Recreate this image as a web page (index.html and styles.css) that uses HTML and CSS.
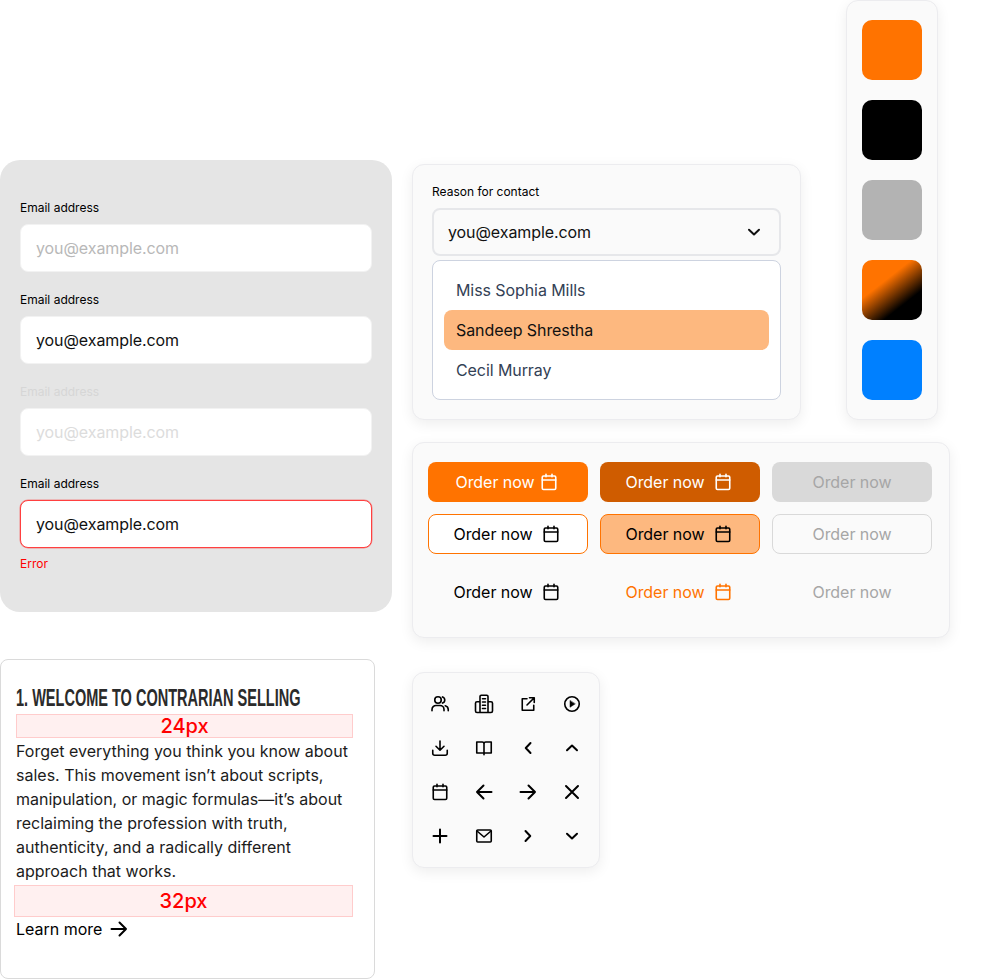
FILE: index.html

```html
<!DOCTYPE html>
<html lang="en">
<head>
  <meta charset="UTF-8" />
  <title>Component sheet</title>
  <link rel="stylesheet" href="styles.css">
</head>
<body>
  <svg class="sprite" xmlns="http://www.w3.org/2000/svg">
    <symbol id="i-calendar" viewBox="0 0 20 20"><rect x="3.25" y="4" width="13.5" height="13.5" rx="1.25"/><path d="M3.250 8h13.500M7 2.250v2.500M13 2.250v2.500"/></symbol>
    <symbol id="i-users" viewBox="0 0 20 20"><circle cx="8" cy="6" r="3.250"/><path d="M2 16.750v-1.250a4 4 0 0 1 4-4h4a4 4 0 0 1 4 4v1.250M12.500 2.900a3.250 3.250 0 0 1 0 6.200M15.250 11.700a4 4 0 0 1 3 3.800v1.250"/></symbol>
    <symbol id="i-building" viewBox="0 0 20 20"><path d="M6 18.500V2.500a1.250 1.250 0 0 1 1.250-1.250h5.500A1.250 1.250 0 0 1 14 2.500v16M6 7.750H3a1.500 1.500 0 0 0-1.500 1.500V17A1.500 1.500 0 0 0 3 18.500h14a1.500 1.500 0 0 0 1.500-1.500V9.250a1.500 1.500 0 0 0-1.500-1.500h-3M8.500 4.750h3M8.500 8h3M8.500 11.250h3M8.500 14.500h3"/></symbol>
    <symbol id="i-external" viewBox="0 0 20 20"><path d="M9 4.750H4.250v11.500h11.500V11.250M9 11 16 4M11.500 3.750h4.750V8.500"/></symbol>
    <symbol id="i-play" viewBox="0 0 20 20"><circle cx="10" cy="10" r="7.250"/><path class="filled" d="M8 6.750v6.500L13 10z"/></symbol>
    <symbol id="i-download" viewBox="0 0 20 20"><path d="M10 3v9M6 8.250l4 4 4-4M2.750 12.250v3a2 2 0 0 0 2 2h10.500a2 2 0 0 0 2-2v-3"/></symbol>
    <symbol id="i-book" viewBox="0 0 20 20"><path d="M2.750 4h5.500A1.750 1.750 0 0 1 10 5.750 1.750 1.750 0 0 1 11.750 4h5.500v11H2.750zM10 5.750V16.750"/></symbol>
    <symbol id="i-left" viewBox="0 0 20 20"><path class="thick" d="M12.500 5 7.750 10l4.750 5"/></symbol>
    <symbol id="i-right" viewBox="0 0 20 20"><path class="thick" d="M7.500 5l4.750 5-4.750 5"/></symbol>
    <symbol id="i-up" viewBox="0 0 20 20"><path class="thick" d="M5 12.250l5-4.750 5 4.750"/></symbol>
    <symbol id="i-down" viewBox="0 0 20 20"><path class="thick" d="M5 7.750l5 4.750 5-4.750"/></symbol>
    <symbol id="i-mail" viewBox="0 0 20 20"><rect x="2.750" y="4" width="14.500" height="12" rx="1"/><path d="M3 5l7 6 7-6"/></symbol>
    <symbol id="i-arrow-left" viewBox="0 0 24 24"><path d="M19.500 12H5M11.500 5.500 5 12l6.500 6.500"/></symbol>
    <symbol id="i-arrow-right" viewBox="0 0 24 24"><path d="M4.500 12H19M12.500 5.500 19 12l-6.500 6.500"/></symbol>
    <symbol id="i-x" viewBox="0 0 24 24"><path d="M6 6l12 12M18 6 6 18"/></symbol>
    <symbol id="i-plus" viewBox="0 0 24 24"><path d="M12 5.500v13M5.500 12h13"/></symbol>
  </svg>

  <div class="sheet">
    <div class="col-left">
      <form class="form-panel">
        <div class="field">
          <label>Email address</label>
          <input type="text" placeholder="you@example.com">
        </div>
        <div class="field">
          <label>Email address</label>
          <input type="text" value="you@example.com">
        </div>
        <div class="field disabled">
          <label>Email address</label>
          <input type="text" placeholder="you@example.com" disabled>
        </div>
        <div class="field error">
          <label>Email address</label>
          <input type="text" value="you@example.com">
          <span class="error-text">Error</span>
        </div>
      </form>

      <article class="article">
        <h2><span>1. Welcome to Contrarian Selling</span></h2>
        <div class="spacer spacer-24">24px</div>
        <p>Forget everything you think you know about sales. This movement isn’t about scripts, manipulation, or magic formulas—it’s about reclaiming the profession with truth, authenticity, and a radically different approach that works.</p>
        <div class="spacer spacer-32">32px</div>
        <a class="learn-more" href="#">Learn more <svg class="ic-24"><use href="#i-arrow-right"/></svg></a>
      </article>
    </div>

    <div class="col-right">
      <div class="top-row">
        <div class="panel select-panel">
          <label>Reason for contact</label>
          <div class="select-box">
            <span>you@example.com</span>
            <svg class="ic-20"><use href="#i-down"/></svg>
          </div>
          <ul class="options">
            <li>Miss Sophia Mills</li>
            <li class="active">Sandeep Shrestha</li>
            <li>Cecil Murray</li>
          </ul>
        </div>
        <div class="panel swatches">
          <div class="swatch orange"></div>
          <div class="swatch black"></div>
          <div class="swatch grey"></div>
          <div class="swatch gradient"></div>
          <div class="swatch blue"></div>
        </div>
      </div>

      <div class="panel buttons">
        <button class="btn solid tight">Order now <svg class="ic-20"><use href="#i-calendar"/></svg></button>
        <button class="btn solid-dark">Order now <svg class="ic-20"><use href="#i-calendar"/></svg></button>
        <button class="btn solid-off">Order now</button>
        <button class="btn outline">Order now <svg class="ic-20"><use href="#i-calendar"/></svg></button>
        <button class="btn outline-on">Order now <svg class="ic-20"><use href="#i-calendar"/></svg></button>
        <button class="btn outline-off">Order now</button>
        <button class="btn ghost">Order now <svg class="ic-20"><use href="#i-calendar"/></svg></button>
        <button class="btn ghost-on">Order now <svg class="ic-20"><use href="#i-calendar"/></svg></button>
        <button class="btn ghost-off">Order now</button>
      </div>

      <div class="panel icons">
        <svg class="ic-20"><use href="#i-users"/></svg>
        <svg class="ic-20"><use href="#i-building"/></svg>
        <svg class="ic-20"><use href="#i-external"/></svg>
        <svg class="ic-20"><use href="#i-play"/></svg>
        <svg class="ic-20"><use href="#i-download"/></svg>
        <svg class="ic-20"><use href="#i-book"/></svg>
        <svg class="ic-20"><use href="#i-left"/></svg>
        <svg class="ic-20"><use href="#i-up"/></svg>
        <svg class="ic-20"><use href="#i-calendar"/></svg>
        <svg class="ic-24"><use href="#i-arrow-left"/></svg>
        <svg class="ic-24"><use href="#i-arrow-right"/></svg>
        <svg class="ic-24"><use href="#i-x"/></svg>
        <svg class="ic-24"><use href="#i-plus"/></svg>
        <svg class="ic-20"><use href="#i-mail"/></svg>
        <svg class="ic-20"><use href="#i-right"/></svg>
        <svg class="ic-20"><use href="#i-down"/></svg>
      </div>
    </div>
  </div>
</body>
</html>
```

FILE: styles.css

```css
* {
  box-sizing: border-box;
}
body {
  margin: 0;
  background: #fff;
  color: #000;
  font-family: Inter, "Noto Sans", sans-serif;
  font-size: 16px;
  line-height: 24px;
}
.sprite {
  display: none;
}
svg {
  fill: none;
  stroke: currentColor;
  stroke-width: 1.6;
  stroke-linecap: round;
  stroke-linejoin: round;
  flex: none;
}
.filled {
  fill: currentColor;
  stroke-width: 0.5;
}
.thick {
  stroke-width: 2;
}
.ic-20 {
  width: 20px;
  height: 20px;
}
.ic-24 {
  width: 24px;
  height: 24px;
  stroke-width: 2;
}
.sheet {
  display: flex;
  gap: 20px;
}
.col-left {
  width: 392px;
  padding-top: 160px;
}
.col-right {
  width: 538px;
}

/* form */
.form-panel {
  height: 452px;
  padding: 40px 20px;
  background: #e5e5e5;
  border-radius: 20px;
  display: flex;
  flex-direction: column;
  gap: 20px;
}
.field label,
.select-panel label {
  display: block;
  font-size: 12px;
  line-height: 16px;
  font-weight: 400;
  margin-bottom: 8px;
}
.field input {
  display: block;
  width: 100%;
  height: 48px;
  padding: 0 15px;
  border: 1px solid #f2f2f2;
  border-radius: 8px;
  background: #fff;
  color: #111;
  font-family: inherit;
  font-size: 16px;
  letter-spacing: -0.08px;
}
.field input::placeholder {
  color: #b8b8b8;
}
.field.disabled label {
  color: #d6d6d6;
}
.field.disabled input::placeholder {
  color: #dcdcdc;
}
.field.error input {
  border-color: #ff4040;
  box-shadow: 0 0 0 0.5px rgba(255, 0, 0, 0.4);
}
.error-text {
  display: block;
  margin-top: 8px;
  font-size: 12px;
  line-height: 16px;
  color: #f00;
}

/* article */
.article {
  width: 375px;
  height: 320px;
  margin-top: 47px;
  padding: 26px 15px 0;
  border: 1px solid #dadada;
  border-radius: 8px;
}
.article h2 {
  margin: 0 0 4px;
  height: 24px;
  font-family: "Liberation Sans", sans-serif;
  font-size: 24px;
  line-height: 24px;
  font-weight: 700;
  text-transform: uppercase;
  color: #2b2b2b;
  white-space: nowrap;
}
.article h2 span {
  display: inline-block;
  transform: scaleX(0.605);
  transform-origin: left center;
}
.article p {
  margin: 1px 0 2px;
  color: #1c1c1c;
}
.spacer {
  background: #fff0f0;
  border: 1px solid #ffcccc;
  color: #f00;
  font-size: 20px;
  font-weight: 500;
  text-align: center;
}
.spacer-24 {
  width: 337px;
  height: 24px;
  line-height: 22px;
}
.spacer-32 {
  width: 339px;
  height: 32px;
  line-height: 30px;
  margin-left: -2px;
}
.learn-more {
  display: flex;
  align-items: center;
  gap: 5px;
  color: #000;
  text-decoration: none;
}

/* panels */
.panel {
  background: #fafafa;
  border: 1px solid #ececef;
  border-radius: 12px;
  box-shadow: 0 4px 14px rgba(0, 0, 0, 0.07);
}
.top-row {
  display: flex;
  gap: 45px;
}
.select-panel {
  width: 389px;
  height: 256px;
  margin-top: 164px;
  padding: 19px;
}
.select-box {
  display: flex;
  align-items: center;
  justify-content: space-between;
  height: 48px;
  padding: 0 14px;
  border: 2px solid #e6e7ea;
  border-radius: 8px;
  color: #111;
  letter-spacing: -0.08px;
}
.select-box svg {
  margin-right: 1px;
}
.options {
  list-style: none;
  height: 140px;
  margin: 4px 0 0;
  padding: 9px 11px;
  background: #fff;
  border: 1px solid #cdd3e0;
  border-radius: 8px;
  color: #334155;
  letter-spacing: -0.08px;
}
.options li {
  height: 40px;
  padding: 8px 12px;
  border-radius: 8px;
}
.options .active {
  background: #fdb87f;
  color: #111;
}
.swatches {
  width: 92px;
  height: 420px;
  padding: 19px 15px;
  display: flex;
  flex-direction: column;
  gap: 20px;
}
.swatch {
  width: 60px;
  height: 60px;
  border-radius: 10px;
}
.orange {
  background: #ff7300;
}
.black {
  background: #000;
}
.grey {
  background: #b3b3b3;
}
.gradient {
  background: linear-gradient(142deg, #ff7300 36%, #000 72%);
}
.blue {
  background: #0080ff;
}

/* buttons */
.buttons {
  display: grid;
  grid-template-columns: repeat(3, 160px);
  grid-template-rows: 40px 40px 40px;
  column-gap: 12px;
  row-gap: 12px;
  width: 538px;
  height: 196px;
  margin-top: 22px;
  padding: 19px 15px;
}
.btn {
  display: flex;
  align-items: center;
  justify-content: center;
  gap: 8px;
  height: 40px;
  padding: 0;
  border: 1px solid transparent;
  border-radius: 8px;
  background: none;
  color: #000;
  font-family: inherit;
  font-size: 16px;
  letter-spacing: -0.05px;
}
.btn svg {
  margin-right: 2px;
}
.btn:nth-child(n + 7) {
  margin-top: 6px;
}
.tight {
  gap: 4px;
}
.solid {
  background: #ff7300;
  color: #fff;
}
.solid-dark {
  background: #cf5c00;
  color: #fff;
}
.solid-off {
  background: #d9d9d9;
  color: #a6a6a6;
}
.outline {
  background: #fff;
  border-color: #ff7300;
}
.outline-on {
  background: #fdb87f;
  border-color: #ff7300;
}
.outline-off {
  border-color: #d9d9d9;
  color: #a6a6a6;
}
.ghost-on {
  color: #ff7300;
}
.ghost-off {
  color: #a6a6a6;
}

/* icon grid */
.icons {
  display: grid;
  grid-template-columns: repeat(4, 44px);
  grid-auto-rows: 44px;
  place-items: center;
  width: 188px;
  height: 196px;
  margin-top: 34px;
  padding: 9px 5px;
}
```
